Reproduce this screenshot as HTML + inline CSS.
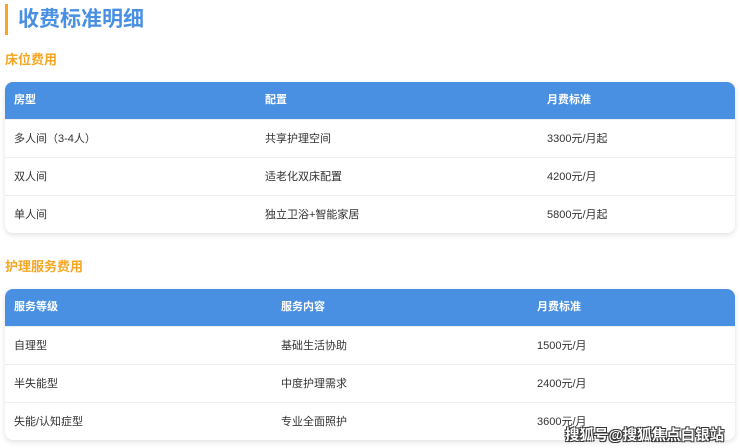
<!DOCTYPE html>
<html><head><meta charset="utf-8"><style>
*{margin:0;padding:0;box-sizing:border-box}
body{width:740px;height:448px;overflow:hidden;background:#fff;font-family:"Liberation Sans","Noto Sans CJK SC",sans-serif;position:relative}
.title{position:absolute;left:5px;top:4px;height:31px;border-left:3px solid #f5a623;padding-left:10px;font-size:21px;font-weight:bold;color:#4a90e2;line-height:31px}
.sec{position:absolute;left:5px;font-size:13px;font-weight:bold;color:#f5a623}
.tbl{position:absolute;left:5px;width:730px;border-radius:8px;overflow:hidden;box-shadow:0 2px 6px rgba(0,0,0,0.12);background:#fff}
.row{height:38px;position:relative;border-top:1px solid #eee;font-size:11px;color:#333}
.row span{position:absolute;top:0;line-height:38px}
.hd{background:#4a90e2;color:#fff;font-weight:bold;height:37px;border:none}
.hd span{line-height:37px}
.wm{position:absolute;left:565px;top:424px;font-size:14.5px;font-weight:bold;color:#fff;text-shadow:-1px -1px 0 #333,1px -1px 0 #333,-1px 1px 0 #333,1px 1px 0 #333}
</style></head><body>
<div class="title">收费标准明细</div>
<div class="sec" style="top:49px">床位费用</div>
<div class="tbl" style="top:82px">
<div class="row hd"><span style="left:9px">房型</span><span style="left:260px">配置</span><span style="left:542px">月费标准</span></div>
<div class="row"><span style="left:9px">多人间（3-4人）</span><span style="left:260px">共享护理空间</span><span style="left:542px">3300元/月起</span></div>
<div class="row"><span style="left:9px">双人间</span><span style="left:260px">适老化双床配置</span><span style="left:542px">4200元/月</span></div>
<div class="row"><span style="left:9px">单人间</span><span style="left:260px">独立卫浴+智能家居</span><span style="left:542px">5800元/月起</span></div>
</div>
<div class="sec" style="top:256px">护理服务费用</div>
<div class="tbl" style="top:289px">
<div class="row hd"><span style="left:9px">服务等级</span><span style="left:276px">服务内容</span><span style="left:532px">月费标准</span></div>
<div class="row"><span style="left:9px">自理型</span><span style="left:276px">基础生活协助</span><span style="left:532px">1500元/月</span></div>
<div class="row"><span style="left:9px">半失能型</span><span style="left:276px">中度护理需求</span><span style="left:532px">2400元/月</span></div>
<div class="row"><span style="left:9px">失能/认知症型</span><span style="left:276px">专业全面照护</span><span style="left:532px">3600元/月</span></div>
</div>
<div class="wm">搜狐号@搜狐焦点白银站</div>
</body></html>
